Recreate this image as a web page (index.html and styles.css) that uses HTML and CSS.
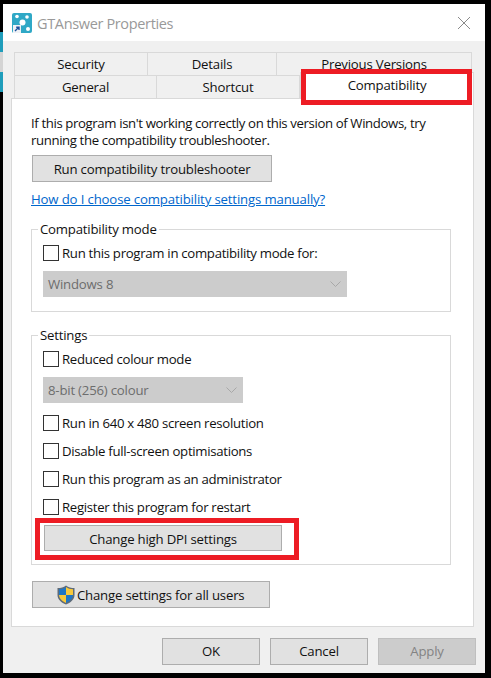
FILE: index.html
```html
<!DOCTYPE html>
<html lang="en">
<head>
    <meta charset="UTF-8">
    <title>GTAnswer Properties</title>
    <link rel="stylesheet" href="styles.css">
</head>
<body>
    <div class="desktop-edge">
        <div class="edge-teal"></div>
        <div class="edge-grey"></div>
        <div class="edge-teal"></div>
    </div>
    <div class="window">
        <div class="titlebar">
            <svg class="app-icon" width="20" height="20" viewBox="0 0 20 20">
                <rect width="20" height="20" rx="2" fill="#2fa8c6"/>
                <circle cx="5" cy="3.5" r="1.8" fill="#fff"/>
                <circle cx="15" cy="4" r="1.8" fill="#fff"/>
                <circle cx="10.5" cy="9.5" r="3" fill="#fff"/>
                <circle cx="16" cy="16" r="2" fill="#fff"/>
                <rect x="1" y="12" width="8" height="8" fill="#eef1f5"/>
                <path d="M3 18 L6.5 14.5 M4.2 14.2 H7 V17" stroke="#1c4f9c" stroke-width="1.4" fill="none"/>
            </svg>
            <span class="title-text">GTAnswer Properties</span>
            <svg class="close-icon" width="12" height="12" viewBox="0 0 12 12">
                <path d="M0 0 L12 12 M12 0 L0 12" stroke="#8a8a8a" stroke-width="1" fill="none"/>
            </svg>
        </div>

        <div class="tab-row tab-row-back">
            <div class="tab tab-security">Security</div>
            <div class="tab tab-details">Details</div>
            <div class="tab tab-versions">Previous Versions</div>
        </div>
        <div class="tab-row">
            <div class="tab tab-general">General</div>
            <div class="tab tab-shortcut">Shortcut</div>
            <div class="tab tab-active">Compatibility</div>
        </div>

        <div class="tab-page">
            <p class="intro">If this program isn't working correctly on this version of Windows, try running the compatibility troubleshooter.</p>
            <button class="btn btn-run btn-offset">Run compatibility troubleshooter</button>
            <a class="help-link" href="#">How do I choose compatibility settings manually?</a>

            <fieldset class="group group-compat">
                <legend>Compatibility mode</legend>
                <label class="check-row"><span class="check"></span>Run this program in compatibility mode for:</label>
                <div class="select select-long">Windows 8
                    <svg width="11" height="6" viewBox="0 0 11 6"><path d="M0.5 0.5 L5.5 5.5 L10.5 0.5" stroke="#a8a8a8" fill="none"/></svg>
                </div>
            </fieldset>

            <fieldset class="group group-settings">
                <legend>Settings</legend>
                <label class="check-row"><span class="check"></span>Reduced colour mode</label>
                <div class="select select-short">8-bit (256) colour
                    <svg width="11" height="6" viewBox="0 0 11 6"><path d="M0.5 0.5 L5.5 5.5 L10.5 0.5" stroke="#a8a8a8" fill="none"/></svg>
                </div>
                <label class="check-row after-select"><span class="check"></span>Run in 640 x 480 screen resolution</label>
                <label class="check-row"><span class="check"></span>Disable full-screen optimisations</label>
                <label class="check-row"><span class="check"></span>Run this program as an administrator</label>
                <label class="check-row"><span class="check"></span>Register this program for restart</label>
                <button class="btn btn-dpi">Change high DPI settings</button>
            </fieldset>

            <button class="btn btn-offset btn-all-users">
                <svg class="shield" width="18" height="20" viewBox="0 0 18 20">
                    <path d="M9 0.5 C11.5 2.5 14 3 17.5 3 V10 C17.5 14.5 13.5 17.8 9 19.5 C4.5 17.8 0.5 14.5 0.5 10 V3 C4 3 6.5 2.5 9 0.5 Z" fill="#5f6b78"/>
                    <path d="M9 2 V10 H2 V4.3 C4.8 4.2 7 3.5 9 2 Z" fill="#1f76c4"/>
                    <path d="M9 2 C11 3.5 13.2 4.2 16 4.3 V10 H9 Z" fill="#f8c93a"/>
                    <path d="M2 10 H9 V18 C5.3 16.4 2.3 13.8 2 10 Z" fill="#f8c93a"/>
                    <path d="M9 10 H16 C15.7 13.8 12.7 16.4 9 18 Z" fill="#1f76c4"/>
                </svg>
                <span>Change settings for all users</span>
            </button>
        </div>

        <div class="footer">
            <button class="btn btn-footer">OK</button>
            <button class="btn btn-footer">Cancel</button>
            <button class="btn btn-footer btn-disabled">Apply</button>
        </div>

        <div class="highlight highlight-tab"></div>
        <div class="highlight highlight-dpi"></div>
    </div>
</body>
</html>
```
FILE: styles.css
```css
:root {
    --face: #f0f0f0;
    --line: #d9d9d9;
    --btn: #e1e1e1;
    --btn-line: #adadad;
    --disabled: #cccccc;
    --red: #ed1c24;
}

* {
    margin: 0;
    padding: 0;
    box-sizing: border-box;
}

body {
    background-color: #000;
    font-family: 'Open Sans', sans-serif;
    font-size: 13.2px;
    letter-spacing: -0.2px;
    color: #111;
    width: 491px;
    height: 678px;
    overflow: hidden;
    display: flex;
    padding: 4px 6px 5px 0;
}

.desktop-edge {
    width: 3px;
    padding-top: 28px;
    flex: none;
}

.edge-teal {
    height: 20px;
    background-color: #1f9dbb;
}

.edge-grey {
    height: 20px;
    background-color: #d4d4d4;
}

.window {
    position: relative;
    width: 482px;
    height: 669px;
    background-color: var(--face);
}

.titlebar {
    height: 37px;
    background-color: #fff;
    display: flex;
    align-items: center;
    padding: 1px 15px 0 9px;
}

.title-text {
    margin-left: 5px;
    font-size: 14.5px;
    letter-spacing: -0.35px;
    color: #999;
}

.close-icon {
    margin-left: auto;
}

.tab-row {
    display: flex;
    margin-left: 11px;
    height: 23px;
}

.tab-row-back {
    margin-top: 11px;
}

.tab {
    display: flex;
    align-items: center;
    justify-content: center;
    height: 23px;
    border: 1px solid var(--line);
    border-bottom: none;
    border-left: none;
}

.tab-security,
.tab-general {
    border-left: 1px solid var(--line);
}

.tab-security { width: 134px; }
.tab-details { width: 129px; }
.tab-versions { width: 195px; }
.tab-general { width: 143px; }
.tab-shortcut { width: 143px; }

.tab-active {
    width: 174px;
    height: 27px;
    margin-top: -3px;
    padding-bottom: 2px;
    background-color: #fff;
    border-left: 1px solid var(--line);
}

.tab-page {
    width: 463px;
    height: 529px;
    margin-left: 8px;
    padding: 16px 19px 0;
    background-color: #fff;
    border: 1px solid var(--line);
}

.intro {
    line-height: 17px;
    letter-spacing: -0.38px;
}

.btn {
    display: flex;
    align-items: center;
    justify-content: center;
    height: 27px;
    background-color: var(--btn);
    border: 1px solid var(--btn-line);
    font-family: inherit;
    font-size: inherit;
    letter-spacing: inherit;
    color: #111;
}

.btn-run {
    width: 240px;
}

.btn-offset {
    margin-left: 1px;
    margin-top: 6px;
}

.help-link {
    display: block;
    margin-top: 7px;
    line-height: 20px;
    letter-spacing: -0.15px;
    color: #0066cc;
}

.group {
    width: 420px;
    border: 1px solid var(--line);
    padding: 0 11px;
    min-width: 0;
}

.group legend {
    margin-left: -5px;
    padding: 0 2px;
    line-height: 18px;
}

.group-compat {
    margin-top: 11px;
    height: 92px;
}

.group-settings {
    margin-top: 14px;
    height: 239px;
}

.check-row {
    display: flex;
    align-items: center;
    gap: 3px;
    height: 16px;
    margin-top: 12px;
    letter-spacing: -0.3px;
    white-space: nowrap;
}

.group legend + .check-row {
    margin-top: 7px;
}

.check {
    width: 16px;
    height: 16px;
    background-color: #fff;
    border: 1px solid #333;
}

.select {
    display: flex;
    align-items: center;
    justify-content: space-between;
    height: 26px;
    margin-top: 10px;
    padding: 0 6px 0 5px;
    background-color: var(--disabled);
    color: #6d6d6d;
}

.select-long { width: 304px; }
.select-short { width: 200px; }

.btn-dpi {
    width: 238px;
    height: 26px;
    margin: 10px 0 0 1px;
    padding-top: 1px;
}

.btn-all-users {
    width: 238px;
    margin-top: 16px;
    justify-content: flex-start;
    gap: 2px;
    padding-left: 24px;
}

.shield {
    flex: none;
}

.footer {
    display: flex;
    justify-content: flex-end;
    gap: 10px;
    padding: 11px 9px 0 0;
}

.btn-footer {
    width: 98px;
    padding-bottom: 1px;
}

.btn-disabled {
    background-color: var(--disabled);
    border-color: #bfbfbf;
    color: #838383;
}

/* red annotation boxes drawn over the dialog */
.highlight {
    position: absolute;
    border: 5px solid var(--red);
}

.highlight-tab {
    left: 298px;
    top: 65px;
    width: 171px;
    height: 36px;
}

.highlight-dpi {
    left: 32px;
    top: 514px;
    width: 264px;
    height: 42px;
}
```
